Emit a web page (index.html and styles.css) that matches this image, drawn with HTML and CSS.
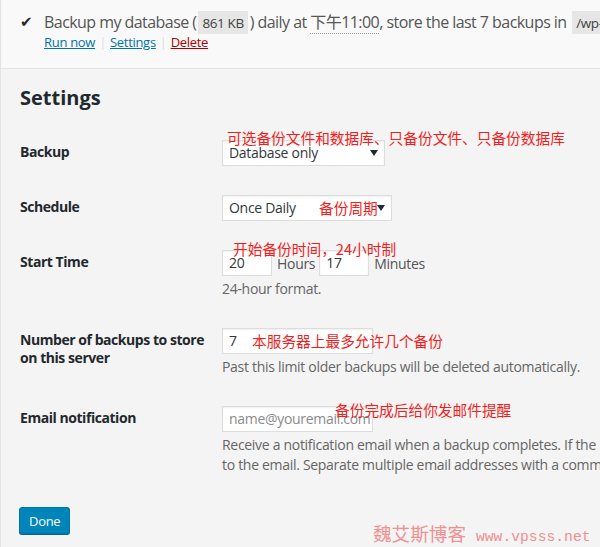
FILE: index.html
```html
<!DOCTYPE html>
<html lang="en">
<head>
<meta charset="utf-8">
<title>Backup settings</title>
<link rel="stylesheet" href="styles.css">
</head>
<body>
<div class="page">
  <div class="summary">
    <div class="summary-line">
      <span class="check">✔</span>
      <span class="summary-text">Backup my database (<code>861 KB</code>) daily at <abbr class="time">下午11:00</abbr>, store the last 7 backups in <code>/wp-content/backups</code></span>
    </div>
    <div class="actions">
      <a href="#" class="link">Run now</a><span class="sep">|</span><a href="#" class="link">Settings</a><span class="sep">|</span><a href="#" class="link delete">Delete</a>
    </div>
  </div>

  <div class="settings">
    <h2 class="title">Settings</h2>
    <div class="form-table">
      <div class="label">Backup</div>
      <div class="field">
        <div class="select select-backup"><span>Database only</span><svg class="caret" width="8" height="6" viewBox="0 0 8 6"><path d="M0 0h8L4 6z" fill="#23282d"/></svg></div>
        <span class="note note-backup">可选备份文件和数据库、只备份文件、只备份数据库</span>
      </div>

      <div class="label">Schedule</div>
      <div class="field">
        <div class="select select-schedule"><span>Once Daily</span><svg class="caret" width="8" height="6" viewBox="0 0 8 6"><path d="M0 0h8L4 6z" fill="#23282d"/></svg></div>
        <span class="note note-schedule">备份周期</span>
      </div>

      <div class="label">Start Time</div>
      <div class="field">
        <div class="time-row">
          <div class="input input-small">20</div>
          <span class="unit">Hours</span>
          <div class="input input-small">17</div>
          <span class="unit">Minutes</span>
        </div>
        <p class="desc">24-hour format.</p>
        <span class="note note-time">开始备份时间，24小时制</span>
      </div>

      <div class="label">Number of backups to store on this server</div>
      <div class="field">
        <div class="input input-wide">7</div>
        <p class="desc">Past this limit older backups will be deleted automatically.</p>
        <span class="note note-count">本服务器上最多允许几个备份</span>
      </div>

      <div class="label">Email notification</div>
      <div class="field">
        <div class="input input-wide placeholder">name@youremail.com</div>
        <p class="desc nowrap">Receive a notification email when a backup completes. If the backup is small enough, it will be sent<br>to the email. Separate multiple email addresses with a comma.</p>
        <span class="note note-email">备份完成后给你发邮件提醒</span>
      </div>
    </div>
    <p class="submit"><button class="button" type="button">Done</button></p>
  </div>

  <div class="watermark"><span class="wm-cn">魏艾斯博客</span><span class="wm-url">www.vpsss.net</span></div>
</div>
</body>
</html>
```
FILE: styles.css
```css
html, body {
  margin: 0;
  padding: 0;
}
body {
  width: 600px;
  height: 547px;
  overflow: hidden;
  background: #f4f4f4;
  font-family: "Open Sans", "Noto Sans", "Noto Sans CJK SC", sans-serif;
  color: #444;
  letter-spacing: -0.3px;
}
.page {
  position: relative;
  height: 547px;
  overflow: hidden;
  border-left: 1px solid #e3e3e3;
  box-sizing: border-box;
}

/* summary panel */
.summary {
  height: 69px;
  box-sizing: border-box;
  background: #f9f9f9;
  border-bottom: 1px solid #e5e5e5;
  padding: 11px 0 0 19px;
  white-space: nowrap;
}
.summary-line {
  display: flex;
  align-items: center;
  height: 22px;
  font-size: 16px;
  line-height: 22px;
  color: #555;
  letter-spacing: -0.55px;
}
.check {
  flex: 0 0 24px;
  font-family: "DejaVu Sans", sans-serif;
  font-size: 15px;
  color: #23282d;
}
.summary-text {
  flex: 0 0 auto;
}
code {
  font-family: inherit;
  font-size: 13.5px;
  letter-spacing: -0.4px;
  background: #e6e6e6;
  padding: 3px 4px 2px;
  margin: 0 2px;
  color: #444;
}
.time {
  text-decoration: none;
  border-bottom: 1px dotted #999;
  font-family: "Open Sans", "Noto Sans CJK SC", sans-serif;
}
.actions {
  padding-left: 24px;
  height: 18px;
  line-height: 18px;
  font-size: 13px;
}
.link {
  color: #0073aa;
  text-decoration: underline;
}
.link.delete {
  color: #a00;
}
.sep {
  color: #ddd;
  margin: 0 4px;
}

/* settings */
.settings {
  padding-left: 19px;
}
.title {
  margin: 16px 0 14px;
  font-size: 20px;
  line-height: 26px;
  font-weight: 700;
  color: #23282d;
  letter-spacing: 0;
}
.form-table {
  display: grid;
  grid-template-columns: 202px 1fr;
}
.label {
  padding: 18px 0 0 0;
  font-size: 14px;
  line-height: 18px;
  font-weight: 700;
  color: #23282d;
  letter-spacing: -0.45px;
}
.field {
  position: relative;
  padding: 15px 0 14px;
  font-size: 14px;
  color: #32373c;
}
.select, .input {
  height: 26px;
  box-sizing: border-box;
  background: #fff;
  border: 1px solid #ddd;
  box-shadow: inset 0 1px 2px rgba(0,0,0,.07);
  font-size: 14px;
  line-height: 24px;
  padding: 0 6px;
  color: #32373c;
}
.select {
  display: flex;
  align-items: center;
  justify-content: space-between;
}
.select-backup { width: 163px; }
.select-schedule { width: 170px; }
.input-small { width: 50px; }
.input-wide { width: 151px; }
.placeholder { color: #8a8a8a; }
.time-row {
  display: flex;
  align-items: center;
}
.unit {
  margin: 0 4px 0 5px;
  color: #555;
}
.desc {
  margin: 3px 0 0;
  font-size: 14px;
  line-height: 20px;
  color: #666;
}
.nowrap { white-space: nowrap; }

/* annotations */
.note {
  position: absolute;
  font-family: "Noto Sans CJK SC", sans-serif;
  font-size: 14.7px;
  line-height: 16px;
  letter-spacing: 0;
  color: #f21d1d;
  white-space: nowrap;
}
.note-backup { left: 5px; top: 5px; }
.note-schedule { left: 97px; top: 20px; }
.note-time { left: 11px; top: 6px; }
.note-count { left: 30px; top: 20px; }
.note-email { left: 113px; top: 11px; }

.submit {
  margin: 18px 0 0 -1px;
}
.button {
  height: 27px;
  padding: 0 9px;
  font-family: inherit;
  font-size: 13px;
  letter-spacing: -0.3px;
  color: #fff;
  background: #0085ba;
  border: 1px solid #0073aa;
  border-radius: 3px;
  box-shadow: 0 1px 0 #006799;
}

.watermark {
  position: absolute;
  left: 372px;
  top: 522px;
  white-space: nowrap;
  color: #f09090;
  line-height: 22px;
  letter-spacing: 0;
}
.wm-cn {
  font-family: "Noto Sans CJK SC", serif;
  font-size: 18.6px;
}
.wm-url {
  margin-left: 10px;
  font-family: "Liberation Mono", monospace;
  font-size: 14.7px;
}
```
